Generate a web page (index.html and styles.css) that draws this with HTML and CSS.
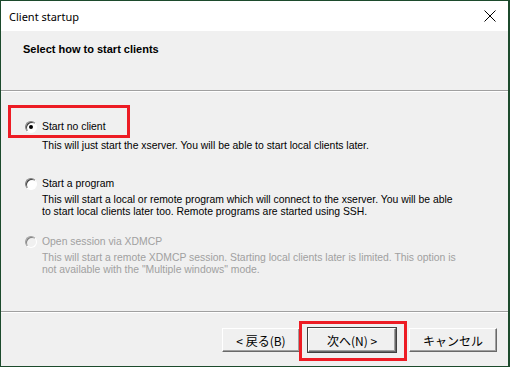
FILE: index.html
```html
<!DOCTYPE html>
<html>
<head>
  <meta charset="UTF-8">
  <title>Client startup</title>
  <link rel="stylesheet" href="styles.css">
</head>
<body>
  <div class="window">
    <div class="titlebar">
      <span class="title">Client startup</span>
      <svg class="close" width="12" height="12" viewBox="0 0 12 12">
        <path d="M0.5 0.5 L11.5 11.5 M11.5 0.5 L0.5 11.5" stroke="#000" stroke-width="1" fill="none"/>
      </svg>
    </div>

    <div class="header">
      <h1>Select how to start clients</h1>
    </div>

    <div class="content">
      <div class="option option-first">
        <div class="radio-row">
          <span class="radio checked"></span>
          <span class="label">Start no client</span>
        </div>
        <p class="desc">This will just start the xserver. You will be able to start local clients later.</p>
      </div>

      <div class="option">
        <div class="radio-row">
          <span class="radio"></span>
          <span class="label">Start a program</span>
        </div>
        <p class="desc">This will start a local or remote program which will connect to the xserver. You will be able<br>to start local clients later too. Remote programs are started using SSH.</p>
      </div>

      <div class="option disabled">
        <div class="radio-row">
          <span class="radio"></span>
          <span class="label">Open session via XDMCP</span>
        </div>
        <p class="desc">This will start a remote XDMCP session. Starting local clients later is limited. This option is<br>not available with the "Multiple windows" mode.</p>
      </div>

      <div class="mark mark-option"></div>
    </div>

    <div class="footer">
      <button class="btn">&lt; 戻る(B)</button>
      <button class="btn btn-default">次へ(N) &gt;</button>
      <button class="btn btn-cancel">キャンセル</button>
      <div class="mark mark-next"></div>
    </div>
  </div>
</body>
</html>
```

FILE: styles.css
```css
* {
  margin: 0;
  padding: 0;
  box-sizing: border-box;
}

body {
  background: #1c4a2c;
  width: 510px;
  height: 367px;
  overflow: hidden;
  font-family: "Liberation Sans", "Noto Sans CJK JP", sans-serif;
  color: #000;
}

.window {
  width: 510px;
  height: 367px;
  border: 1px solid #1c4a2c;
  border-right-width: 2px;
  background: #f0f0f0;
  display: flex;
  flex-direction: column;
}

/* タイトルバー */
.titlebar {
  height: 30px;
  background: #fff;
  display: flex;
  align-items: center;
  padding: 0 10px 0 8px;
  flex-shrink: 0;
}

.title {
  flex-grow: 1;
  font-family: "Noto Sans", sans-serif;
  font-size: 11px;
  color: #000;
}

.close {
  margin-right: 2px;
}

/* ヘッダー */
.header {
  height: 60px;
  flex-shrink: 0;
  background: #f0f0f0;
  border-bottom: 1px solid #a0a0a0;
  box-shadow: 0 1px 0 #fff;
  padding: 11px 0 0 22px;
}

h1 {
  font-size: 11px;
  font-weight: 700;
  line-height: 14px;
}

/* 選択肢 */
.content {
  flex-grow: 1;
  position: relative;
  padding: 29px 0 0 24px;
  font-size: 10.4px;
}

.option {
  height: 58px;
}

.radio-row {
  display: flex;
  align-items: center;
  height: 14px;
}

.radio {
  width: 12px;
  height: 12px;
  border-radius: 50%;
  border: 1px solid;
  border-color: #808080 #fff #fff #808080;
  background: #fff;
  box-shadow: inset 1px 1px 0 #404040;
  margin-right: 5px;
  position: relative;
}

.radio.checked::after {
  content: '';
  position: absolute;
  left: 3px;
  top: 3px;
  width: 4px;
  height: 4px;
  border-radius: 50%;
  background: #000;
}

.label {
  line-height: 14px;
}

.desc {
  margin: 3px 0 0 17px;
  line-height: 12px;
}

.option-first {
  height: 57px;
}

.option-first .desc {
  margin-top: 6px;
}

.disabled .label,
.disabled .desc {
  color: #a0a0a0;
}

.disabled .radio {
  background: #f0f0f0;
  border-color: #a0a0a0 #fff #fff #a0a0a0;
  box-shadow: inset 1px 1px 0 #808080;
}

/* フッター */
.footer {
  height: 55px;
  flex-shrink: 0;
  border-top: 1px solid #a0a0a0;
  box-shadow: inset 0 1px 0 #fff;
  display: flex;
  justify-content: flex-end;
  align-items: flex-start;
  padding: 16px 11px 0 0;
  position: relative;
}

.btn {
  height: 24px;
  width: 78px;
  background: #f0f0f0;
  border: 1px solid;
  border-color: #fff #696969 #696969 #fff;
  box-shadow: inset -1px -1px 0 #a0a0a0;
  font-family: "Noto Sans CJK JP", sans-serif;
  font-size: 12px;
  color: #000;
  margin-left: 8px;
}

.btn-default {
  width: 88px;
  outline: 1px solid #404040;
  outline-offset: 0;
}

.btn-cancel {
  width: 88px;
  margin-left: 13px;
}

/* 赤枠 */
.mark {
  position: absolute;
  border: 3px solid #ed1c24;
}

.mark-option {
  left: 7px;
  top: 14px;
  width: 122px;
  height: 33px;
}

.mark-next {
  left: 298px;
  top: 9px;
  width: 108px;
  height: 40px;
}
```
